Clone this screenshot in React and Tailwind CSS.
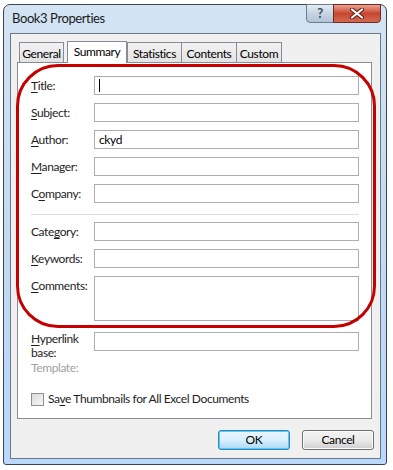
import React from 'react';

const font = { fontFamily: 'Lato, "Noto Sans", Arial, sans-serif' };

function Key({ children }) {
  return <span className="underline underline-offset-[2px]">{children}</span>;
}

function Field({ label, value, tall, caret }) {
  return (
    <div className="flex items-start">
      <div className="w-[63px] shrink-0 text-[12px] leading-[19px] text-[#1e1e1e]">{label}</div>
      <div
        className={`w-[265px] border border-[#abadb3] bg-white px-[4px] text-[12px] leading-[17px] text-black ${tall ? 'h-[45px]' : 'h-[19px]'}`}
      >
        {caret ? <span className="inline-block h-[13px] w-px translate-y-[2px] bg-black" /> : value}
      </div>
    </div>
  );
}

function Tab({ label, active, className }) {
  if (active) {
    return (
      <div className={`relative z-10 -mb-px flex h-[22px] justify-center border border-b-0 border-[#898c95] bg-white pt-[1px] text-[12px] leading-[17px] text-black ${className}`}>
        {label}
      </div>
    );
  }
  return (
    <div className={`mt-[2px] flex h-[20px] justify-center border border-b-0 border-[#898c95] bg-gradient-to-b from-[#f2f2f2] to-[#e3e3e3] pt-[2px] text-[12px] leading-[17px] text-black ${className}`}>
      {label}
    </div>
  );
}

export default function App() {
  return (
    <div className="relative h-[470px] w-[393px] overflow-hidden bg-white tracking-[-0.4px]" style={font}>
      {/* Window frame */}
      <div className="ml-[3px] mt-[4px] flex h-[461px] w-[384px] flex-col rounded-t-[7px] rounded-b-[3px] border border-[#3d4650] bg-gradient-to-b from-[#d3e4f4] via-[#c3daf1] to-[#b9d8fc]">
        {/* Title bar */}
        <div className="relative flex h-[28px] shrink-0 items-center pl-[8px]">
          <span className="text-[13px] text-[#1a1a1a]">Book3 Properties</span>
          <div className="absolute right-[5px] top-[-1px] flex">
            <div className="flex h-[19px] w-[28px] items-center justify-center rounded-bl-[4px] border border-[#6f7c8c] bg-gradient-to-b from-[#e4ecf4] via-[#c6d4e2] to-[#b3c4d6] text-[13px] font-bold leading-none text-[#3a4a5c]">
              ?
            </div>
            <div className="-ml-px flex h-[19px] w-[48px] items-center justify-center rounded-br-[4px] border border-[#6e2a22] bg-gradient-to-b from-[#e8a291] via-[#c8452f] to-[#d06a52]">
              <svg width="14" height="11" viewBox="0 0 14 11">
                <path d="M2 1.5 L12 9.5 M12 1.5 L2 9.5" stroke="#5a1a12" strokeWidth="4" strokeLinecap="round" />
                <path d="M2 1.5 L12 9.5 M12 1.5 L2 9.5" stroke="#ffffff" strokeWidth="2.2" strokeLinecap="round" />
              </svg>
            </div>
          </div>
        </div>

        {/* Client area */}
        <div className="ml-[6px] mr-[5px] flex h-[426px] flex-col border border-[#6b7886] bg-[#f0f0f0] px-[6px] pt-[7px]">
          {/* Tabs */}
          <div className="flex h-[21px] items-end">
            <Tab label="General" className="ml-[2px] w-[45px]" />
            <Tab label="Summary" active className="ml-[3px] w-[60px]" />
            <Tab label="Statistics" className="w-[55px]" />
            <Tab label="Contents" className="-ml-px w-[56px]" />
            <Tab label="Custom" className="-ml-px w-[46px]" />
          </div>

          {/* Tab panel */}
          <div className="flex h-[357px] w-[355px] flex-col border border-[#898c95] bg-white pl-[13px] pt-[13px]">
            <div className="flex flex-col gap-[8px]">
              <Field label={<><Key>T</Key>itle:</>} caret />
              <Field label={<><Key>S</Key>ubject:</>} />
              <Field label={<><Key>A</Key>uthor:</>} value="ckyd" />
              <Field label={<><Key>M</Key>anager:</>} />
              <Field label={<>C<Key>o</Key>mpany:</>} />
            </div>
            <div className="mb-[7px] mt-[11px] h-px w-[328px] bg-[#d5dfe5]" />
            <div className="flex flex-col gap-[8px]">
              <Field label={<>Cate<Key>g</Key>ory:</>} />
              <Field label={<><Key>K</Key>eywords:</>} />
              <Field label={<><Key>C</Key>omments:</>} tall />
            </div>
            <div className="mt-[11px] flex items-start">
              <div className="w-[63px] shrink-0 text-[12px] leading-[14px] text-[#1e1e1e]">
                <Key>H</Key>yperlink
                <br />
                base:
              </div>
              <div className="h-[19px] w-[265px] border border-[#abadb3] bg-white" />
            </div>
            <div className="mt-0 text-[12px] leading-[16px] text-[#a0a0a0]">Template:</div>
            <div className="mt-[15px] flex items-center gap-[4px]">
              <div className="h-[13px] w-[13px] border border-[#8f8f8f] bg-gradient-to-br from-[#dcdcdc] to-[#f6f6f6]" />
              <span className="text-[12px] leading-[16px] text-[#1e1e1e]">
                Sa<Key>v</Key>e Thumbnails for All Excel Documents
              </span>
            </div>
          </div>

          {/* Buttons */}
          <div className="mt-[11px] flex justify-end gap-[12px]">
            <div className="flex h-[20px] w-[72px] items-center justify-center rounded-[3px] border border-[#3c7fb1] bg-gradient-to-b from-[#eaf6fd] via-[#d9f0fc] to-[#a7d9f5] text-[12px] text-black shadow-[inset_0_0_0_1px_#48d0f8]">
              OK
            </div>
            <div className="flex h-[20px] w-[72px] items-center justify-center rounded-[3px] border border-[#707070] bg-gradient-to-b from-[#f2f2f2] via-[#ebebeb] to-[#cfcfcf] text-[12px] text-black shadow-[inset_0_0_0_1px_#fcfcfc]">
              Cancel
            </div>
          </div>
        </div>
      </div>

      {/* Red annotation outline */}
      <div className="pointer-events-none absolute left-[16px] top-[64px] h-[264px] w-[360px] rounded-[42px] border-[3px] border-[#c40000]" />
    </div>
  );
}
